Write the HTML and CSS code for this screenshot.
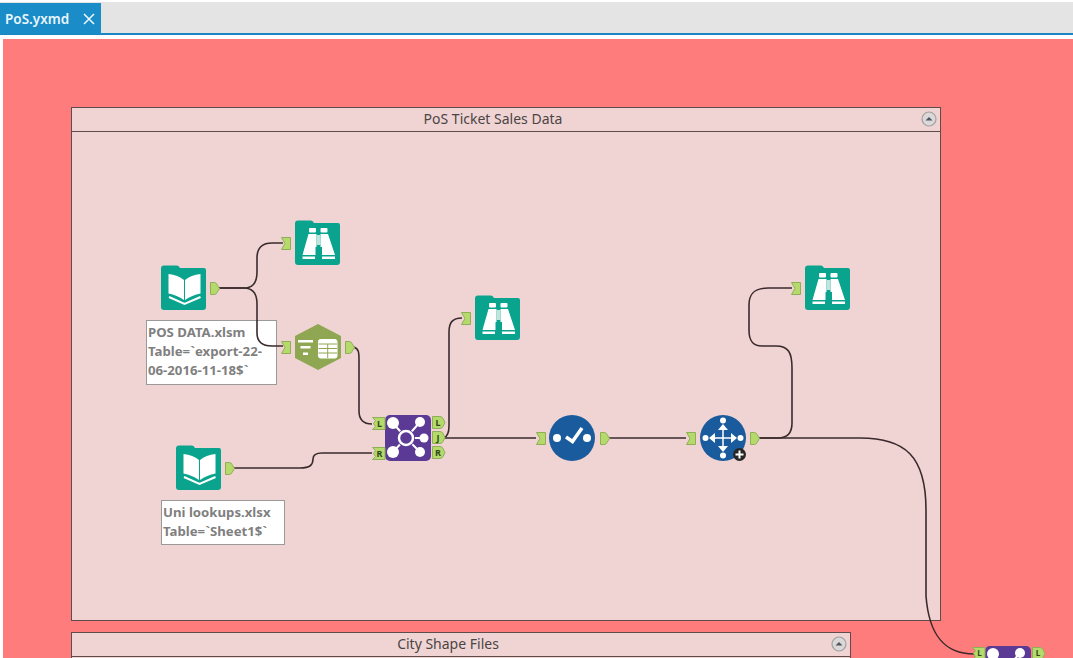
FILE: index.html
```html
<!DOCTYPE html>
<html lang="en">
<head>
<meta charset="utf-8">
<title>PoS.yxmd</title>
<link rel="stylesheet" href="styles.css">
</head>
<body>
<header class="tabbar">
  <div class="tab"><span class="tab-name">PoS.yxmd</span><svg class="tab-close" width="12" height="12" viewBox="0 0 12 12"><path d="M1 1 L11 11 M11 1 L1 11"/></svg></div>
</header>
<main class="canvas">
  <section class="container container-pos">
    <div class="container-head">PoS Ticket Sales Data
      <svg class="collapse" width="16" height="16" viewBox="0 0 16 16"><circle cx="8" cy="8" r="7" class="collapse-ring"/><path d="M4.5 9.5 L8 6 L11.5 9.5 Z" class="collapse-arrow"/></svg>
    </div>
  </section>
  <section class="container container-city">
    <div class="container-head">City Shape Files
      <svg class="collapse" width="16" height="16" viewBox="0 0 16 16"><circle cx="8" cy="8" r="7" class="collapse-ring"/><path d="M4.5 9.5 L8 6 L11.5 9.5 Z" class="collapse-arrow"/></svg>
    </div>
  </section>
  <div class="note note-pos">POS DATA.xlsm<br>Table=`export-22-<br>06-2016-11-18$`</div>
  <div class="note note-uni">Uni lookups.xlsx<br>Table=`Sheet1$`</div>

  <svg class="diagram" width="1070" height="619" viewBox="3 39 1070 619">
    <defs>
      <path id="tile" d="M3 0.500 H16 Q18 0.500 19 3 H43 Q45 3 45 5 V42 Q45 45 42 45 H3 Q0 45 0 42 V3.500 Q0 0.500 3 0.500 Z"/>
      <g id="input-tool">
        <use href="#tile" class="teal"/>
        <path class="white" d="M7.500 9 Q17 10 23 15 V35 Q16 30 7.500 28.500 Z"/>
        <path class="white" d="M39.500 9 Q30 10 24 15 V35 Q31 30 39.500 28.500 Z"/>
        <path class="white-line" d="M8 32 L23.500 39 L39.500 32"/>
      </g>
      <g id="browse-tool">
        <use href="#tile" class="teal"/>
        <rect class="white" x="14" y="8" width="7" height="4.500" rx="1"/>
        <rect class="white" x="25.500" y="8" width="7" height="4.500" rx="1"/>
        <path class="white" d="M13.500 14 H21.500 V27 H20.500 V35 H7.500 Z"/>
        <path class="white" d="M25.500 14 H33 L40 35 H27 V27 H25.500 Z"/>
        <rect class="pale" x="21.500" y="15" width="4" height="10"/>
        <rect class="white" x="7.500" y="36.500" width="12.500" height="2.500"/>
        <rect class="white" x="27" y="36.500" width="13" height="2.500"/>
      </g>
      <path id="anchor-out" class="anchor" d="M0.500 0.500 H4.500 Q6 0.500 7 2.500 L9.500 6.500 L7 10.500 Q6 12.500 4.500 12.500 H0.500 Z"/>
      <path id="anchor-in" class="anchor" d="M0.500 0.500 H9.500 V12.500 H0.500 L4 6.500 Z"/>
      <path id="anchor-out-wide" class="anchor" d="M0.500 0.500 H8 Q10 0.500 11 2.500 L13 6.500 L11 10.500 Q10 12.500 8 12.500 H0.500 Z"/>
      <path id="anchor-in-wide" class="anchor" d="M0.500 0.500 H13 V12.500 H0.500 L3.500 9.500 L1.500 6.500 L3.500 3.500 Z"/>
      <g id="join-tool">
        <rect width="46" height="46" rx="5" class="purple"/>
        <path class="white-line" d="M8 8 L21 23 L8 37 M35 7 L21 23 L35 37 M21 23 H39"/>
        <circle cx="21" cy="23" r="9" class="purple"/>
        <circle cx="21" cy="23" r="7" class="ring"/>
        <circle cx="8" cy="8" r="6" class="white"/>
        <circle cx="8" cy="37" r="6" class="white"/>
        <circle cx="35" cy="7" r="5" class="white"/>
        <circle cx="39" cy="23" r="4.500" class="white"/>
        <circle cx="35" cy="37" r="5" class="white"/>
      </g>
    </defs>

    <g class="wires">
      <path d="M219 288 H244 C253 288 257 282 257 272 V258 C257 248 262 243 272 243 H283"/>
      <path d="M219 288 H244 C253 288 257 294 257 304 V333 C257 342 262 346 272 346 H283"/>
      <path d="M354 347 C359 349 359 353 359 360 V411 C359 419 363 424 372 424"/>
      <path d="M234 468 H300 C310 468 313 465 313 459 C313 455 316 453 322 453 H372"/>
      <path d="M444 438 C448 436 449 432 449 426 V332 C449 323 452 318 462 318"/>
      <path d="M444 438 H536"/>
      <path d="M609 438 H686"/>
      <path d="M759 438 H778 C788 438 792 433 792 423 V368 C792 352 788 346 776 346 H762 C752 346 749 340 749 330 V305 C749 293 755 288 768 288 H792"/>
      <path d="M759 438 H860 C905 438 926 456 926 510 V596 C929 636 945 654 974 654"/>
    </g>

    <use href="#input-tool" x="161" y="265"/>
    <use href="#anchor-out" x="210" y="282"/>
    <use href="#anchor-in" x="281" y="237"/>
    <use href="#browse-tool" x="295" y="220"/>

    <use href="#anchor-in" x="281" y="341"/>
    <path class="olive" d="M318 324 L341 336 V358 L318 370 L295 358 V336 Z"/>
    <g class="white">
      <rect x="298" y="340" width="15" height="2.500"/>
      <rect x="300.500" y="346" width="10" height="2.500"/>
      <rect x="303" y="352.500" width="5" height="2.500"/>
    </g>
    <rect class="table-frame" x="318.500" y="339.500" width="18.500" height="18.500" rx="2"/>
    <path class="table-grid" d="M318.500 344 H337 M318.500 348.500 H337 M318.500 353 H337 M327.700 344 V358"/>
    <use href="#anchor-out" x="345" y="341"/>

    <use href="#browse-tool" x="475" y="295"/>
    <use href="#anchor-in" x="461" y="312"/>

    <use href="#input-tool" x="176" y="445"/>
    <use href="#anchor-out" x="225" y="462"/>

    <use href="#join-tool" x="385" y="415"/>
    <g class="port"><use href="#anchor-in-wide" x="372" y="417"/><text x="379.500" y="427">L</text></g>
    <g class="port"><use href="#anchor-in-wide" x="372" y="447"/><text x="379.500" y="457">R</text></g>
    <g class="port"><use href="#anchor-out-wide" x="432" y="416"/><text x="438" y="426">L</text></g>
    <g class="port"><use href="#anchor-out-wide" x="432" y="431"/><text x="438" y="441">J</text></g>
    <g class="port"><use href="#anchor-out-wide" x="432" y="446"/><text x="438" y="456">R</text></g>

    <use href="#anchor-in" x="536" y="432"/>
    <circle cx="572" cy="438" r="23" class="blue"/>
    <circle cx="557" cy="438" r="4" class="white"/>
    <circle cx="587" cy="438" r="4" class="white"/>
    <path class="check" d="M566 437 L572.500 441.500 L582 428"/>
    <use href="#anchor-out" x="600" y="432"/>

    <use href="#anchor-in" x="686" y="432"/>
    <circle cx="723" cy="438" r="23" class="blue"/>
    <g class="white">
      <circle cx="723" cy="420.500" r="3"/><circle cx="723" cy="455.500" r="3"/>
      <circle cx="705.500" cy="438" r="3"/><circle cx="740.500" cy="438" r="3"/>
      <path d="M723 424 L728 430 H718 Z M723 452 L728 446 H718 Z M709 438 L715 433 V443 Z M737 438 L731 433 V443 Z"/>
    </g>
    <path class="move-cross" d="M723 428 V448 M713 438 H733"/>
    <circle cx="739.500" cy="454.500" r="6.500" class="badge"/>
    <path class="badge-plus" d="M739.500 450.500 V458.500 M735.500 454.500 H743.500"/>
    <use href="#anchor-out" x="750" y="432"/>

    <use href="#browse-tool" x="805" y="265"/>
    <use href="#anchor-in" x="791" y="282"/>

    <use href="#join-tool" x="985" y="646"/>
    <g class="port"><use href="#anchor-in-wide" x="972" y="647"/><text class="port-edge" x="979.500" y="656">L</text></g>
    <g class="port"><use href="#anchor-out-wide" x="1032" y="647"/><text class="port-edge" x="1038" y="656">L</text></g>
  </svg>
</main>
</body>
</html>
```
FILE: styles.css
```css
* { box-sizing: border-box; }
html, body { margin: 0; height: 100%; overflow: hidden; background: #fff; }
body {
  display: flex;
  flex-direction: column;
  padding-top: 2px;
  font-family: "Noto Sans", "Open Sans", sans-serif;
}
.tabbar {
  flex: none;
  height: 33px;
  background: #e4e4e4;
  border-bottom: 2px solid #1b86c4;
  display: flex;
}
.tab {
  width: 101px;
  height: 31px;
  margin-top: 1px;
  padding-left: 5px;
  background: #1a8cc8;
  color: #eaf6fc;
  display: flex;
  align-items: center;
  gap: 14px;
  font-size: 13.500px;
  font-weight: 600;
}
.tab-close { fill: none; stroke: #f2fafe; stroke-width: 1.500; }
.canvas {
  flex: 1;
  position: relative;
  margin: 4px 0 0 3px;
  background: #ff7c7d;
  overflow: hidden;
}
.container {
  position: absolute;
  background: #f0d4d4;
  border: 1px solid #5e4c4c;
}
.container-pos { left: 68px; top: 68px; width: 870px; height: 514px; }
.container-city { left: 68px; top: 593px; width: 780px; height: 60px; }
.container-head {
  position: relative;
  height: 24px;
  padding: 0 26px 2px 0;
  border-bottom: 1px solid #5e4c4c;
  display: flex;
  align-items: center;
  justify-content: center;
  font-size: 14px;
  color: #4a4444;
}
.collapse { position: absolute; right: 3px; top: 3px; }
.collapse-ring { fill: #dcd8d8; stroke: #a0a0a0; stroke-width: 1.200; }
.collapse-arrow { fill: #4a5560; }
.note {
  position: absolute;
  background: #fff;
  border: 1px solid #9a9a9a;
  padding: 2px 1px;
  color: #7f7f7f;
  font-size: 13.200px;
  font-weight: 700;
  line-height: 19px;
  white-space: nowrap;
}
.note-pos { left: 143px; top: 281px; width: 131px; height: 65px; }
.note-uni { left: 158px; top: 461px; width: 124px; height: 45px; }
.diagram { position: absolute; left: 0; top: 0; }
.wires path { fill: none; stroke: #3a2a2c; stroke-width: 1.600; }
.teal { fill: #0aa48e; }
.white { fill: #fff; }
.pale { fill: #bfe5dd; }
.white-line { fill: none; stroke: #fff; stroke-width: 2; }
.anchor { fill: #b5d96a; stroke: #8fae58; stroke-width: 1; }
.purple { fill: #5a3a94; }
.ring { fill: none; stroke: #fff; stroke-width: 2.500; }
.olive { fill: #8fa652; }
.table-frame { fill: #fff; stroke: #fff; }
.table-grid { fill: none; stroke: #8fa652; stroke-width: 1; }
.blue { fill: #1a5b9e; }
.check { fill: none; stroke: #fff; stroke-width: 3.500; }
.move-cross { fill: none; stroke: #fff; stroke-width: 1.500; }
.badge { fill: #262626; }
.badge-plus { fill: none; stroke: #fff; stroke-width: 2; }
.port text {
  font-family: "Noto Sans", sans-serif;
  font-size: 9px;
  font-weight: 700;
  fill: #2e4a1c;
  text-anchor: middle;
}
.port .port-edge { font-size: 8px; }
```
